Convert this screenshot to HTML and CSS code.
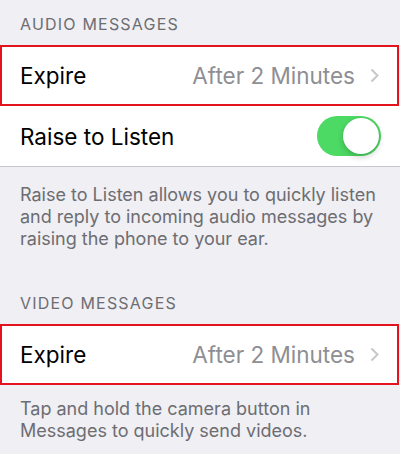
FILE: index.html
```html
<!DOCTYPE html>
<html lang="en">
<head>
    <meta charset="UTF-8">
    <meta name="viewport" content="width=device-width, initial-scale=1.0">
    <title>Messages</title>
    <link rel="stylesheet" href="styles.css">
</head>
<body>
    <div class="settings">
        <div class="group-header">AUDIO MESSAGES</div>
        <div class="cell marked">
            <span class="cell-title">Expire</span>
            <span class="cell-value">After 2 Minutes</span>
            <svg class="chevron" width="9" height="15" viewBox="0 0 9 15">
                <polyline points="1.5,1.5 7.5,7.5 1.5,13.5" fill="none" stroke="#c7c7cc" stroke-width="2"/>
            </svg>
        </div>
        <div class="cell last">
            <span class="cell-title">Raise to Listen</span>
            <span class="switch on"><span class="knob"></span></span>
        </div>
        <div class="group-footer">Raise to Listen allows you to quickly listen and reply to incoming audio messages by raising the phone to your ear.</div>

        <div class="group-header">VIDEO MESSAGES</div>
        <div class="cell marked">
            <span class="cell-title">Expire</span>
            <span class="cell-value">After 2 Minutes</span>
            <svg class="chevron" width="9" height="15" viewBox="0 0 9 15">
                <polyline points="1.5,1.5 7.5,7.5 1.5,13.5" fill="none" stroke="#c7c7cc" stroke-width="2"/>
            </svg>
        </div>
        <div class="group-footer end">Tap and hold the camera button in Messages to quickly send videos.</div>
    </div>
</body>
</html>
```

FILE: styles.css
```css
body {
    margin: 0;
    background-color: #efeff4;
    font-family: Inter, "Noto Sans", Arial, sans-serif;
    color: #000;
}
.settings {
    width: 400px;
}
.group-header {
    height: 45px;
    box-sizing: border-box;
    padding: 14px 20px 0;
    font-size: 16px;
    line-height: 20px;
    letter-spacing: 1.2px;
    color: #6d6d72;
}
.cell {
    display: flex;
    align-items: center;
    height: 61px;
    box-sizing: border-box;
    padding: 0 20px;
    background-color: #fff;
}
.cell.marked {
    border: 2px solid #e3141d;
    margin-right: 1px;
    padding: 0 18px;
}
.cell.last {
    border-bottom: 1px solid #c8c7cc;
}
.cell-title {
    font-size: 22.5px;
    flex: 1;
}
.cell-value {
    font-size: 22.5px;
    color: #8e8e93;
}
.chevron {
    margin-left: 15px;
}
.switch {
    position: relative;
    width: 64px;
    height: 40px;
    border-radius: 20px;
    background-color: #4cd964;
    margin-right: -1px;
}
.switch .knob {
    position: absolute;
    top: 2px;
    right: 2px;
    width: 36px;
    height: 36px;
    border-radius: 50%;
    background-color: #fff;
    box-shadow: 0 3px 6px rgba(0,0,0,0.2), 0 0 1px rgba(0,0,0,0.15);
}
.group-footer {
    padding: 17px 20px 29px;
    font-size: 18px;
    line-height: 22px;
    color: #6d6d72;
}
.group-footer.end {
    padding: 13px 20px 8px;
}
```
